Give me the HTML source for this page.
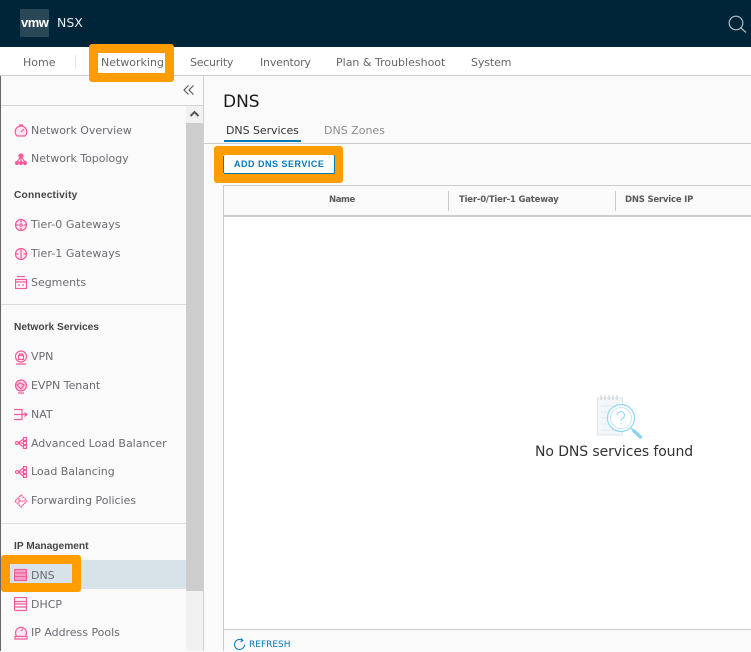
<!DOCTYPE html>
<html><head><meta charset="utf-8"><style>
html,body{margin:0;padding:0}
body{width:751px;height:651px;overflow:hidden;position:relative;background:#fafafa;font-family:"DejaVu Sans","Liberation Sans",sans-serif}
.a{position:absolute}
.t{position:absolute;white-space:nowrap;line-height:14px;height:14px}
.n{font-size:11px;color:#6b6b72;letter-spacing:-.02px}
.s{font:bold 10.200px/14px "Liberation Sans",sans-serif;color:#454545}
.top{font-size:11px;color:#666}
svg.i{position:absolute;fill:none;stroke:#f45b9c;stroke-width:1.2}
.h{font-size:8.500px;font-weight:bold;color:#5a5a5a;letter-spacing:-.2px}
</style></head><body>
<div class="a" style="left:0;top:0;width:751px;height:47px;background:#002538"></div>
<div class="a" style="left:20px;top:9px;width:29px;height:28px;background:#2a4757;border-radius:1px"></div>
<div class="t" style="left:21px;top:16px;font:bold 13px/14px 'Liberation Sans',sans-serif;color:#fff;letter-spacing:-.5px">vmw</div>
<div class="t" style="left:57px;top:16px;font:12.500px/14px 'DejaVu Sans',sans-serif;color:#e8edf0;">NSX</div>
<svg class="a" style="left:727px;top:14px" width="24" height="20" fill="none" stroke="#b4bec4" stroke-width="1.2"><circle cx="9" cy="9" r="6.8"/><path d="M14 14l5 4.500"/></svg>

<div class="a" style="left:0;top:47px;width:751px;height:28px;background:#fff"></div>
<div class="a" style="left:0;top:75px;width:751px;height:1px;background:#ccc"></div>
<div class="a" style="left:75px;top:55px;width:1px;height:14px;background:#e4e4e4"></div>
<div class="t top" style="left:23px;top:56px">Home</div>
<div class="a" style="left:89px;top:44px;width:67px;height:20px;border:9px solid #ff9c00;border-radius:3px;background:#fff"></div>
<div class="t top" style="left:101px;top:56px">Networking</div>
<div class="t top" style="left:190px;top:56px;letter-spacing:-.25px">Security</div>
<div class="t top" style="left:260px;top:56px;letter-spacing:-.2px">Inventory</div>
<div class="t top" style="left:336px;top:56px">Plan &amp; Troubleshoot</div>
<div class="t top" style="left:471px;top:56px;letter-spacing:-.1px">System</div>

<div class="a" style="left:0;top:76px;width:1px;height:575px;background:#666"></div>
<div class="a" style="left:1px;top:105px;width:202px;height:1px;background:#d4d4d4"></div>
<div class="a" style="left:203px;top:76px;width:1px;height:575px;background:#d0d0d0"></div>
<svg class="a" style="left:183px;top:84px" width="12" height="12" fill="none" stroke="#555" stroke-width="1.1"><path d="M5.500 1.500L1 6l4.500 4.500M10.500 1.500L6 6l4.500 4.500"/></svg>
<div class="a" style="left:186px;top:106px;width:17px;height:545px;background:#f1f1f1"></div>
<div class="a" style="left:186px;top:123px;width:17px;height:468px;background:#cdcdcd"></div>
<svg class="a" style="left:189px;top:110px" width="11" height="8" fill="none" stroke="#555" stroke-width="2"><path d="M1.500 6L5.500 2l4 4"/></svg>
<div class="a" style="left:1px;top:304px;width:185px;height:1px;background:#ddd"></div>
<div class="a" style="left:1px;top:523px;width:185px;height:1px;background:#ddd"></div>
<div class="a" style="left:1px;top:560px;width:185px;height:29px;background:#d8e3e9"></div>
<div class="a" style="left:1px;top:555px;width:62px;height:19px;border:9px solid #ff9c00;border-radius:3px;background:#d8e3e9"></div>

<div class="t n" style="left:31px;top:124px">Network Overview</div>
<div class="t n" style="left:31px;top:152px">Network Topology</div>
<div class="t s" style="left:14px;top:189px;letter-spacing:.2px">Connectivity</div>
<div class="t n" style="left:31px;top:218px;letter-spacing:.05px">Tier-0 Gateways</div>
<div class="t n" style="left:31px;top:247px;letter-spacing:.05px">Tier-1 Gateways</div>
<div class="t n" style="left:31px;top:276px">Segments</div>
<div class="t s" style="left:14px;top:321px">Network Services</div>
<div class="t n" style="left:31px;top:350px">VPN</div>
<div class="t n" style="left:31px;top:379px">EVPN Tenant</div>
<div class="t n" style="left:31px;top:408px">NAT</div>
<div class="t n" style="left:31px;top:437px">Advanced Load Balancer</div>
<div class="t n" style="left:31px;top:465px">Load Balancing</div>
<div class="t n" style="left:31px;top:494px">Forwarding Policies</div>
<div class="t s" style="left:14px;top:540px">IP Management</div>
<div class="t n" style="left:31px;top:569px">DNS</div>
<div class="t n" style="left:31px;top:598px">DHCP</div>
<div class="t n" style="left:31px;top:626px">IP Address Pools</div>

<svg class="i" style="left:14px;top:124px" width="14" height="14"><path d="M3 12A5.800 5.800 0 1 1 11 12Z" fill="#fde6ef"/><path d="M7 8l3-3M5 1h4"/></svg>
<svg class="i" style="left:14px;top:152px" width="14" height="14"><circle cx="7" cy="4" r="2" fill="#f45b9c"/><circle cx="3" cy="11" r="1.500" fill="#f45b9c"/><circle cx="7" cy="11" r="1.500" fill="#f45b9c"/><circle cx="11" cy="11" r="1.500" fill="#f45b9c"/><path d="M6 6l-3 4M7 6v4M8 6l3 4"/></svg>
<svg class="i" style="left:14px;top:218px" width="14" height="14"><circle cx="7" cy="7" r="5.500" fill="#fde6ef"/><path d="M1.500 7h3M9.500 7h3M7 1.500v3M7 9.500v3"/><circle cx="7" cy="7" r="1.200"/></svg>
<svg class="i" style="left:14px;top:247px" width="14" height="14"><circle cx="7" cy="7" r="5.500" fill="#fde6ef"/><path d="M1.500 7h3M9.500 7h3M7 1.500v11"/></svg>
<svg class="i" style="left:15px;top:276px" width="12" height="13"><path d="M.5 3.500h11v9H.5zM2 .5h8M.5 6h11M3 9h2M7 9h2"/></svg>
<svg class="i" style="left:14px;top:350px" width="14" height="15"><circle cx="7" cy="6.500" r="5.500"/><rect x="4.500" y="5.500" width="5" height="4"/><path d="M5.500 5.500V4h3v1.500M2 14h10"/></svg>
<svg class="i" style="left:14px;top:379px" width="14" height="15"><circle cx="7" cy="6.500" r="5.500" fill="#fbc9dd"/><path d="M3 6l3-2 4 2-3 4zM4 14h6"/></svg>
<svg class="i" style="left:14px;top:408px" width="14" height="14"><path d="M0 1.500h8v10H0M0 6.500h13M10.500 4.500l2.500 2-2.500 2"/></svg>
<svg class="i" style="left:15px;top:437px" width="12" height="12"><circle cx="2" cy="6" r="1.500"/><rect x="8.500" y=".5" width="3" height="3"/><rect x="8.500" y="4.500" width="3" height="3"/><rect x="8.500" y="8.500" width="3" height="3"/><path d="M3.500 5.500l5-3.500M3.500 6h5M3.500 6.500l5 3.500"/></svg>
<svg class="i" style="left:15px;top:466px" width="12" height="12"><circle cx="2" cy="6" r="1.500"/><rect x="8.500" y=".5" width="3" height="3"/><rect x="8.500" y="4.500" width="3" height="3"/><rect x="8.500" y="8.500" width="3" height="3"/><path d="M3.500 5.500l5-3.500M3.500 6h5M3.500 6.500l5 3.500"/></svg>
<svg class="i" style="left:14px;top:494px" width="14" height="14"><path d="M7 1l6 6-6 6-6-6zM5 7h6M5 4.500v5" stroke-dasharray="2 .6"/></svg>
<svg class="i" style="left:14px;top:568px" width="13" height="14"><rect x=".5" y="1.500" width="12" height="11" fill="#f6a3c4"/><path d="M.5 5h12M.5 8.500h12"/></svg>
<svg class="i" style="left:14px;top:597px" width="13" height="15"><rect x=".5" y=".5" width="12" height="13" rx="1"/><path d="M.5 4.500h12M.5 7h12M.5 10h12"/></svg>
<svg class="i" style="left:14px;top:625px" width="14" height="15"><path d="M2.500 11A5.500 5.500 0 1 1 11.500 11" fill="#fde6ef"/><path d="M1 11.500h12v2.500H1zM7 6l2-2"/></svg>

<div class="t" style="left:223px;top:92px;height:20px;font:17px/20px 'DejaVu Sans',sans-serif;color:#1a1a1a">DNS</div>
<div class="t" style="left:226px;top:124px;font-size:11px;color:#333;letter-spacing:-.06px">DNS Services</div>
<div class="t" style="left:324px;top:124px;font-size:11px;color:#8c8c8c">DNS Zones</div>
<div class="a" style="left:224px;top:140px;width:77px;height:2px;background:#0079b8"></div>
<div class="a" style="left:204px;top:143px;width:547px;height:1px;background:#ccc"></div>

<div class="a" style="left:214px;top:146px;width:111px;height:19px;border:9px solid #ff9c00;border-radius:3px;background:#fff"></div>
<div class="a" style="left:223px;top:155px;width:110px;height:18px;border-bottom:1px solid #0079b8;border-left:1px solid #0079b8;border-right:1px solid #0079b8;border-radius:2px;background:#fff"></div>
<div class="t" style="left:234px;top:157px;font:bold 9px/14px 'Liberation Sans',sans-serif;color:#0079b8;letter-spacing:.5px">ADD DNS SERVICE</div>

<div class="a" style="left:223px;top:185px;width:528px;height:1px;background:#ccc"></div>
<div class="a" style="left:223px;top:185px;width:1px;height:466px;background:#ccc"></div>
<div class="a" style="left:224px;top:215px;width:527px;height:2px;background:#ccc"></div>
<div class="a" style="left:224px;top:217px;width:527px;height:412px;background:#fff"></div>
<div class="a" style="left:224px;top:629px;width:527px;height:1px;background:#ccc"></div>
<div class="a" style="left:448px;top:191px;width:1px;height:20px;background:#ccc"></div>
<div class="a" style="left:615px;top:191px;width:1px;height:20px;background:#ccc"></div>
<div class="t h" style="left:329px;top:193px;letter-spacing:-.4px">Name</div>
<div class="t h" style="left:459px;top:193px">Tier-0/Tier-1 Gateway</div>
<div class="t h" style="left:625px;top:193px">DNS Service IP</div>

<svg class="a" style="left:596px;top:392px" width="50" height="50" fill="none"><path d="M1.500 6h25v37h-25z" fill="#f4f7f9" stroke="#dde5ea"/><path d="M5 3v5M9 3v5M13 3v5M17 3v5M21 3v5" stroke="#c5ced3"/><path d="M5 14h20M5 20h20M5 26h20M5 32h20M5 38h20" stroke="#e3e9ed"/><circle cx="25" cy="26" r="13.500" fill="#fff" stroke="#8fd6f4" stroke-width="1.200"/><circle cx="25" cy="26" r="10.500" stroke="#c0e8f8"/><path d="M21.500 23a3.500 3.500 0 1 1 5 3.300c-1 .6-1.500 1-1.500 2.500M25 31v1.500" stroke="#84d0f0"/><path d="M35 36l3 3" stroke="#8fd6f4" stroke-width="1.500"/><path d="M38 39l6.500 6" stroke="#8ad3f2" stroke-width="3.500" stroke-linecap="round"/></svg>
<div class="t" style="left:535px;top:444px;height:16px;font:14px/16px 'DejaVu Sans',sans-serif;color:#333;letter-spacing:-.1px">No DNS services found</div>

<svg class="a" style="left:233px;top:638px" width="13" height="13" fill="none" stroke="#0079b8"><path d="M11.500 6.500a5 5 0 1 1-2-4M8 .5l2 2-2.500 1.500"/></svg>
<div class="t" style="left:249px;top:638px;font:9px/14px 'DejaVu Sans',sans-serif;color:#0079b8">REFRESH</div>
</body></html>
